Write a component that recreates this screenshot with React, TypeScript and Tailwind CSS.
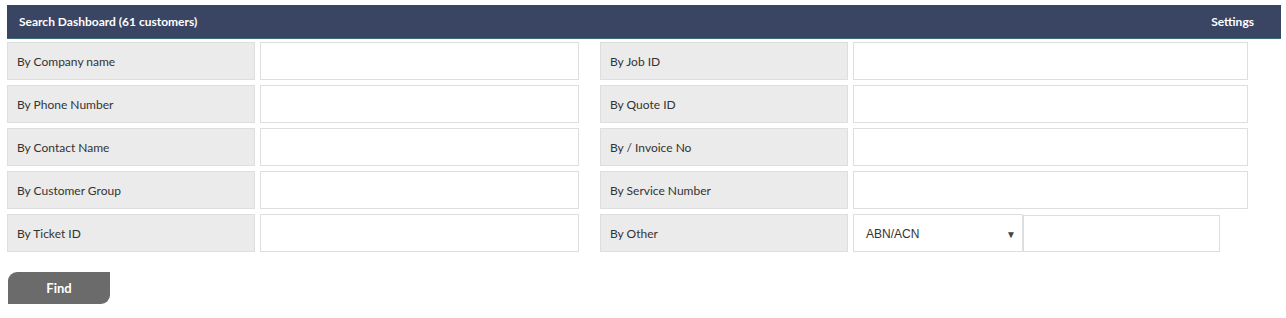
import React from "react";

const leftRows = ["By Company name", "By Phone Number", "By Contact Name", "By Customer Group", "By Ticket ID"];
const rightRows = ["By Job ID", "By Quote ID", "By / Invoice No", "By Service Number"];

function Label({ text }: { text: string }) {
  return (
    <div className="w-[248px] h-[38px] bg-[#ebebeb] border border-[#dedede] flex items-center pl-[9px] pt-[2px] text-[12px] text-[#333]">
      {text}
    </div>
  );
}

export default function App() {
  return (
    <div className="bg-white w-[1286px] h-[318px] pt-[5px] pl-[7px]" style={{ fontFamily: "Lato, 'Liberation Sans', sans-serif" }}>
      <div className="w-[1274px] h-[34px] bg-[#3a4563] border-b border-[#3f6878] flex items-center justify-between pl-[12px] pr-[27px] text-white text-[12px] font-bold">
        <span>Search Dashboard (61 customers)</span>
        <span>Settings</span>
      </div>
      <div className="flex mt-[3px]">
        <div className="flex flex-col gap-[5px]">
          {leftRows.map((t) => (
            <div key={t} className="flex gap-[5px]">
              <Label text={t} />
              <div className="w-[319px] h-[38px] bg-white border border-[#dedede]" />
            </div>
          ))}
        </div>
        <div className="flex flex-col gap-[5px] ml-[21px]">
          {rightRows.map((t) => (
            <div key={t} className="flex gap-[5px]">
              <Label text={t} />
              <div className="w-[395px] h-[38px] bg-white border border-[#dedede]" />
            </div>
          ))}
          <div className="flex gap-[5px]">
            <Label text="By Other" />
            <div className="flex">
              <div className="w-[170px] h-[38px] bg-white border border-[#dedede] flex items-center justify-between pl-[12px] pr-[6px] pt-[2px] text-[12px] text-[#333]" style={{ fontFamily: "'Liberation Sans', Arial, sans-serif" }}>
                <span>ABN/ACN</span>
                <span className="text-[10px] text-[#444]">▼</span>
              </div>
              <div className="w-[197px] h-[37px] mt-[1px] bg-white border border-[#dedede]" />
            </div>
          </div>
        </div>
      </div>
      <button className="mt-[20px] ml-[1px] w-[102px] h-[32px] pt-[1px] bg-[#6b6b6b] text-white text-[13px] font-bold rounded-tl-[9px] rounded-br-[9px] flex items-center justify-center">
        Find
      </button>
    </div>
  );
}
